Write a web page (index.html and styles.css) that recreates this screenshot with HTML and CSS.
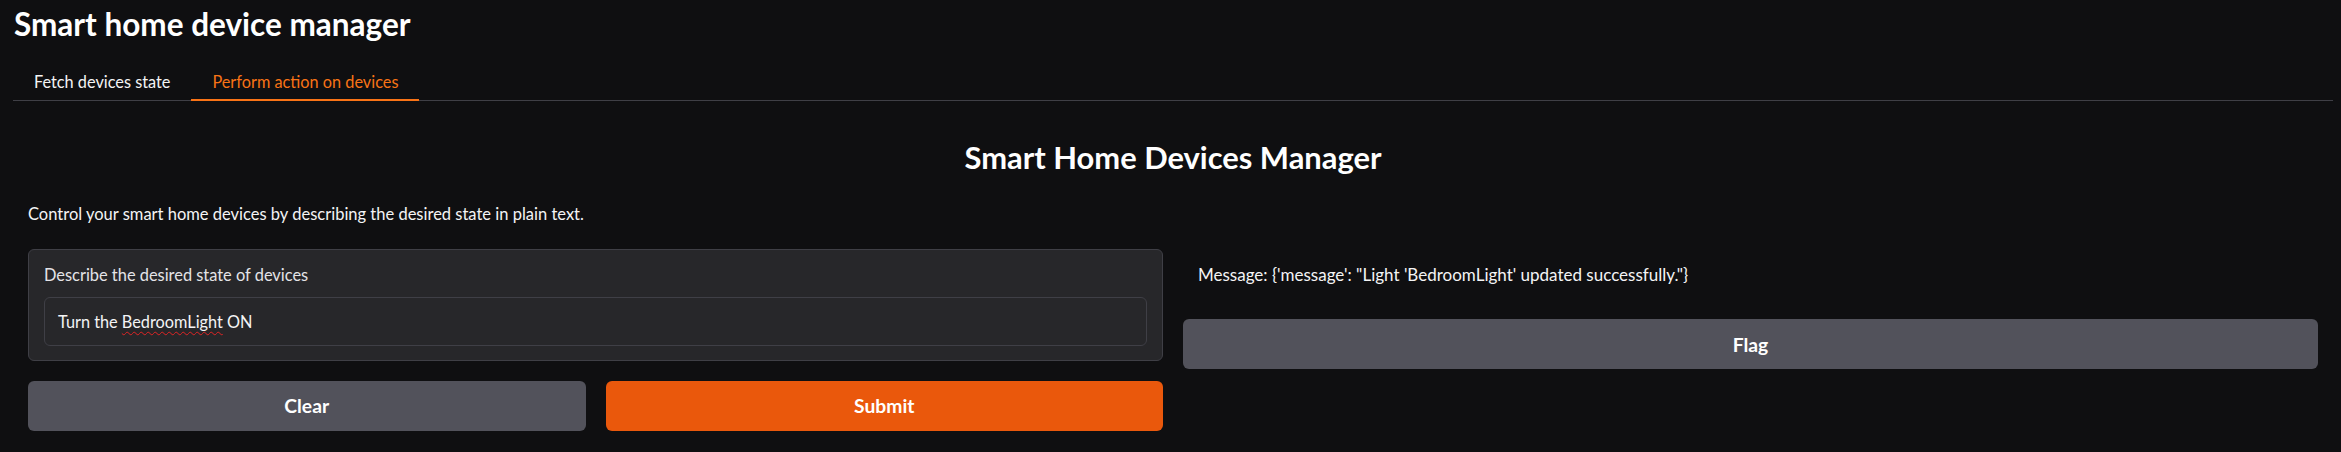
FILE: index.html
```html
<!DOCTYPE html>
<html lang="en">
<head>
<meta charset="utf-8">
<title>Smart home device manager</title>
<link rel="stylesheet" href="styles.css">
</head>
<body>
<div class="app">
  <h1 class="app-title">Smart home device manager</h1>
  <div class="tabs">
    <div class="tab-nav">
      <button class="tab">Fetch devices state</button>
      <button class="tab tab-selected">Perform action on devices</button>
    </div>
    <div class="tab-content">
      <h2 class="heading">Smart Home Devices Manager</h2>
      <p class="desc">Control your smart home devices by describing the desired state in plain text.</p>
      <div class="cols">
        <div class="col">
          <div class="block">
            <div class="block-label">Describe the desired state of devices</div>
            <div class="textbox">Turn the <span class="misspelled">BedroomLight</span> ON</div>
          </div>
          <div class="btn-row">
            <button class="btn btn-secondary">Clear</button>
            <button class="btn btn-primary">Submit</button>
          </div>
        </div>
        <div class="col">
          <div class="message">Message: {'message': "Light 'BedroomLight' updated successfully."}</div>
          <button class="btn btn-secondary btn-flag">Flag</button>
        </div>
      </div>
    </div>
  </div>
</div>
</body>
</html>
```
FILE: styles.css
```css
html, body {
  margin: 0;
  padding: 0;
  background: #0f0f11;
}
body {
  font-family: Lato, "Noto Sans", sans-serif;
  color: #f4f4f5;
}
.app {
  margin: 0 8px 0 13px;
  padding-top: 6px;
}
.app-title {
  margin: 0 0 0 1px;
  font-size: 31.5px;
  font-weight: 700;
  line-height: 1.2;
  color: #ffffff;
}
.tab-nav {
  display: flex;
  margin-top: 20px;
  border-bottom: 1px solid #3f3f46;
}
.tab {
  font-family: inherit;
  font-size: 16.3px;
  line-height: 20px;
  color: #f4f4f5;
  background: transparent;
  border: none;
  border-bottom: 2px solid transparent;
  margin: 0 0 -1px 0;
  padding: 8px 21px 7px 21px;
  cursor: pointer;
}
.tab-selected {
  color: #f97316;
  border-bottom-color: #f97316;
}
.tab-content {
  padding: 0 15px;
}
.heading {
  margin: 38px 0 0 0;
  text-align: center;
  font-size: 30.9px;
  font-weight: 700;
  line-height: 1.2;
  color: #ffffff;
}
.desc {
  margin: 29px 0 0 0;
  font-size: 16.5px;
  line-height: 1.2;
}
.cols {
  display: grid;
  grid-template-columns: 1fr 1fr;
  gap: 20px;
  margin-top: 24px;
}
.col {
  display: flex;
  flex-direction: column;
  gap: 20px;
}
.block {
  background: #27272a;
  border: 1px solid #3f3f46;
  border-radius: 6px;
  padding: 15px 15px 14px 15px;
}
.block-label {
  font-size: 16.4px;
  line-height: 1.2;
  color: #e4e4e7;
  margin-bottom: 12.5px;
}
.textbox {
  box-sizing: border-box;
  height: 49px;
  border: 1px solid #3f3f46;
  border-radius: 6px;
  background: #27272a;
  padding: 0 13px;
  font-size: 16.3px;
  line-height: 47px;
  color: #f4f4f5;
}
.misspelled {
  text-decoration: underline wavy #e02424;
  text-decoration-thickness: 1px;
  text-underline-offset: 3px;
}
.btn-row {
  display: grid;
  grid-template-columns: 1fr 1fr;
  gap: 20px;
}
.btn {
  font-family: inherit;
  font-size: 19.3px;
  font-weight: 700;
  color: #ffffff;
  height: 50px;
  border: none;
  border-radius: 6px;
  cursor: pointer;
}
.btn-secondary {
  background: #52525b;
}
.btn-primary {
  background: #ea580c;
}
.message {
  padding: 16px 15px 14px 15px;
  font-size: 17px;
  line-height: 1.2;
  color: #f4f4f5;
}
.btn-flag {
  width: 100%;
}
```
